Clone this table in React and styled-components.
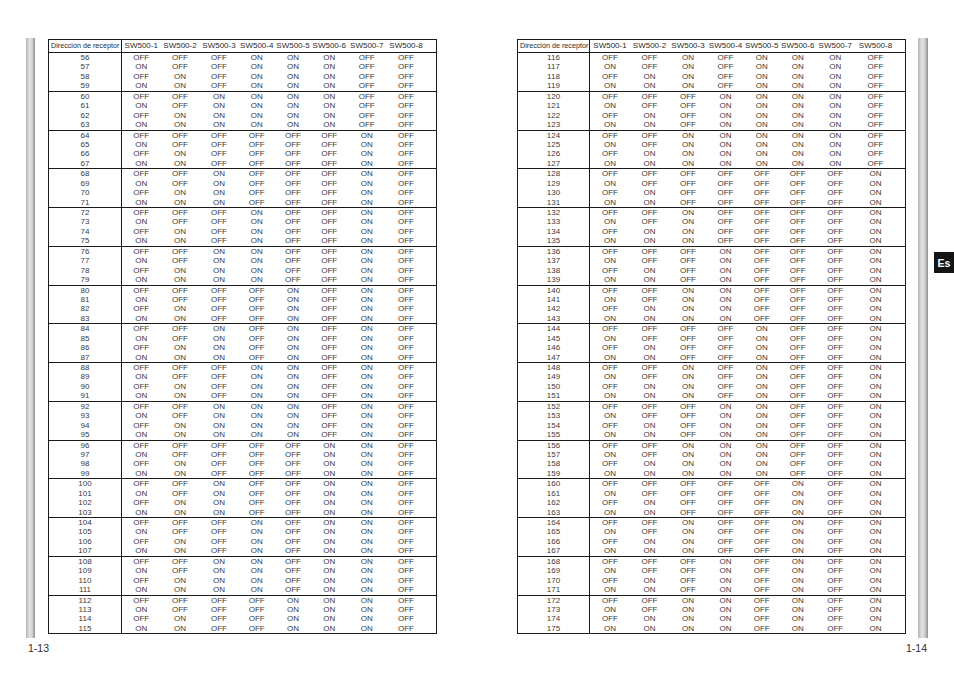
import React from "react";
import styled, { createGlobalStyle } from "styled-components";

const Global = createGlobalStyle`
  html, body {
    margin: 0;
    padding: 0;
    background: #ffffff;
  }
  body {
    font-family: "Liberation Sans", Arial, sans-serif;
    color: #333;
  }
`;

const Page = styled.div`
  width: 954px;
  height: 677px;
  padding-top: 38px;
  box-sizing: border-box;
  display: flex;
  flex-direction: column;
`;

const Spread = styled.div`
  display: flex;
  align-items: flex-start;
`;

const Strip = styled.div`
  flex: none;
  width: ${p => p.w}px;
  height: 600px;
  margin-left: ${p => p.ml}px;
  background: linear-gradient(90deg, #b3b3b3 0%, #e4e4e4 40%, #cfcfcf 70%, #8f8f8f 100%);
`;

const Table = styled.div`
  flex: none;
  width: 389px;
  box-sizing: border-box;
  margin-left: ${p => p.ml}px;
  margin-top: 1px;
  border: 1px solid #1a1a1a;
  display: flex;
  flex-direction: column;
`;

const Head = styled.div`
  display: grid;
  grid-template-columns: ${p => p.cols};
  height: 12px;
  border-bottom: 1px solid #1a1a1a;
  align-items: center;
  color: #2a2a2a;
`;

const HeadAddr = styled.div`
  height: 100%;
  border-right: 1px solid #1a1a1a;
  font-size: 7.2px;
  line-height: 12px;
  padding-left: 2px;
  white-space: nowrap;
  overflow: hidden;
`;

const HeadCell = styled.div`
  font-size: 8px;
  line-height: 12px;
  text-align: center;
  white-space: nowrap;
`;

const Group = styled.div`
  display: grid;
  grid-template-columns: ${p => p.cols};
  grid-auto-rows: 9.45px;
  border-top: ${p => (p.first ? "none" : "1px solid #1a1a1a")};
`;

const AddrCell = styled.div`
  border-right: 1px solid #1a1a1a;
  font-size: 8px;
  line-height: 9.45px;
  text-align: center;
  color: #3a3a3a;
`;

const Value = styled.div`
  font-size: 8px;
  line-height: 9.45px;
  text-align: center;
  color: #3a3a3a;
  white-space: nowrap;
`;

const Side = styled.div`
  flex: none;
  margin-left: 6px;
  margin-top: 214px;
`;

const LangTab = styled.div`
  width: 20px;
  height: 21px;
  background: #141414;
  color: #fff;
  font-weight: bold;
  font-size: 10.5px;
  display: flex;
  align-items: center;
  justify-content: center;
`;

const Footer = styled.div`
  display: flex;
  justify-content: space-between;
  padding: 0 27px 0 28px;
  margin-top: 4px;
  font-size: 10.5px;
  color: #2e2e2e;
`;

const tables = [
  {
    from: 56,
    ml: 13,
    cols: "73px 38.5px 39px 39px 36.5px 36px 36.5px 38.5px 40px 9px",
  },
  {
    from: 116,
    ml: 80,
    cols: "72px 40px 39px 38px 37px 35.5px 36.5px 38.5px 42px 7px",
  },
];

const switches = [1, 2, 3, 4, 5, 6, 7, 8];

function SwitchTable({ from, ml, cols }) {
  const groups = [];
  for (let g = 0; g < 15; g++) {
    groups.push([0, 1, 2, 3].map(i => from + g * 4 + i));
  }
  return (
    <Table ml={ml}>
      <Head cols={cols}>
        <HeadAddr>Dirección de receptor</HeadAddr>
        {switches.map(n => (
          <HeadCell key={n}>SW500-{n}</HeadCell>
        ))}
        <span />
      </Head>
      {groups.map((rows, g) => (
        <Group key={g} cols={cols} first={g === 0}>
          {rows.map(addr => (
            <React.Fragment key={addr}>
              <AddrCell>{addr}</AddrCell>
              {switches.map(n => (
                <Value key={n}>{(addr >> (n - 1)) & 1 ? "ON" : "OFF"}</Value>
              ))}
              <span />
            </React.Fragment>
          ))}
        </Group>
      ))}
    </Table>
  );
}

export default function App() {
  return (
    <>
      <Global />
      <Page>
        <Spread>
          <Strip w={9} ml={26} />
          <SwitchTable {...tables[0]} />
          <SwitchTable {...tables[1]} />
          <Strip w={10} ml={12} />
          <Side>
            <LangTab>Es</LangTab>
          </Side>
        </Spread>
        <Footer>
          <span>1-13</span>
          <span>1-14</span>
        </Footer>
      </Page>
    </>
  );
}
